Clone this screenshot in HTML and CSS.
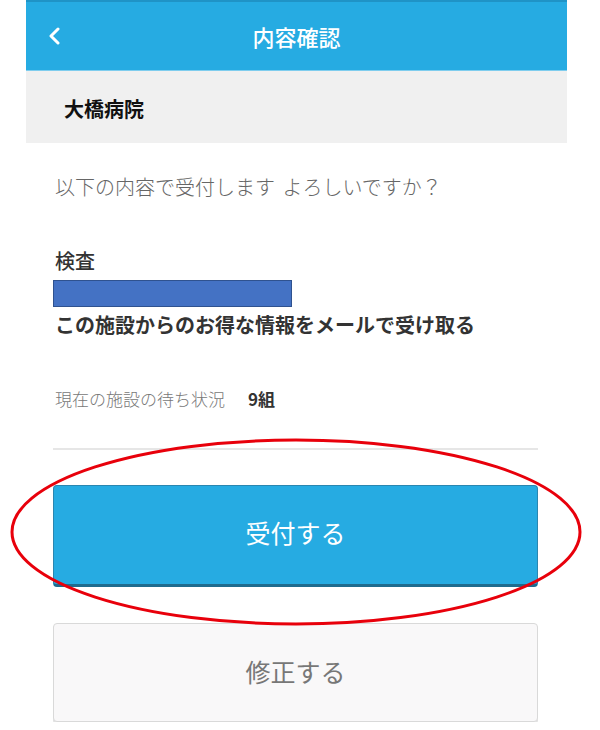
FILE: index.html
```html
<!DOCTYPE html>
<html lang="ja">
<head>
  <meta charset="UTF-8" />
  <meta name="viewport" content="width=device-width, initial-scale=1.0"/>
  <title>内容確認</title>
  <link rel="stylesheet" href="styles.css">
</head>
<body>
  <div class="app">
    <header class="topbar">
      <button class="back" aria-label="戻る">
        <svg width="12" height="18" viewBox="0 0 12 18">
          <polyline points="10,2 3,9 10,16" fill="none" stroke="#fff" stroke-width="3" stroke-linecap="round" stroke-linejoin="round"/>
        </svg>
      </button>
      <h1>内容確認</h1>
      <span></span>
    </header>

    <div class="facility">大橋病院</div>

    <main class="content">
      <p class="intro">以下の内容で受付します よろしいですか？</p>

      <p class="item">検査</p>
      <div class="redact"></div>
      <p class="mail">この施設からのお得な情報をメールで受け取る</p>

      <p class="wait">現在の施設の待ち状況<strong>9組</strong></p>

      <hr class="rule">

      <button class="btn btn-primary">受付する</button>
      <button class="btn btn-secondary">修正する</button>
    </main>
  </div>

  <!-- red annotation round the submit button -->
  <svg class="mark" width="600" height="730" viewBox="0 0 600 730">
    <ellipse cx="296" cy="532" rx="284" ry="92" fill="none" stroke="#e8000b" stroke-width="3"/>
  </svg>
</body>
</html>
```

FILE: styles.css
```css
:root {
  --blue: #26abe2;
  --gray-bg: #f0f0f0;
  --text: #222;
  --muted: #666;
}

* {
  box-sizing: border-box;
}

body {
  margin: 0;
  background: #fff;
  font-family: "Noto Sans CJK JP", "Noto Sans", sans-serif;
  color: var(--text);
  position: relative;
}

.app {
  width: 541px;
  margin-left: 26px;
}

.topbar {
  display: grid;
  grid-template-columns: 1fr auto 1fr;
  align-items: center;
  height: 71px;
  background: var(--blue);
  border-top: 2px solid #1f93c6;
  border-bottom: 1px solid #7fcdee;
}

.back {
  justify-self: start;
  background: none;
  border: none;
  padding: 0 0 0 22px;
  display: flex;
}

.topbar h1 {
  margin: 0;
  color: #fff;
  font-size: 22px;
  font-weight: 500;
  line-height: 1;
}

.facility {
  height: 72px;
  display: flex;
  align-items: center;
  padding-left: 38px;
  padding-top: 2px;
  background: var(--gray-bg);
  font-size: 20px;
  font-weight: 700;
  color: #111;
}

.content {
  padding: 30px 29px 0;
}

.content p {
  margin: 0;
}

.intro {
  font-size: 20px;
  line-height: 28px;
  font-weight: 300;
  color: var(--muted);
  word-spacing: 3px;
}

.item {
  margin-top: 46px !important;
  font-size: 20px;
  line-height: 28px;
  font-weight: 500;
  color: #333;
}

.redact {
  width: 239px;
  height: 27px;
  margin-top: 5px;
  margin-left: -2px;
  background: #4472c4;
  border: 1px solid #2f528f;
}

.mail {
  margin-top: 4px !important;
  font-size: 20px;
  line-height: 28px;
  font-weight: 700;
  color: #333;
}

.wait {
  margin-top: 48px !important;
  font-size: 17px;
  line-height: 24px;
  font-weight: 300;
  color: #777;
}

.wait strong {
  margin-left: 23px;
  font-weight: 700;
  color: #333;
}

.rule {
  margin: 37px 0 0 -2px;
  border: none;
  height: 2px;
  background: #e6e6e6;
}

.btn {
  display: block;
  width: calc(100% + 2px);
  margin-left: -2px;
  border-radius: 4px;
  font-family: inherit;
  font-size: 25px;
  font-weight: 400;
}

.btn-primary {
  height: 102px;
  margin-top: 35px;
  padding-bottom: 8px;
  background: var(--blue);
  color: #fff;
  border: 1px solid #2a86b0;
  border-bottom: 3px solid #1f6b8e;
}

.btn-secondary {
  height: 99px;
  margin-top: 36px;
  padding-bottom: 5px;
  background: #f9f8f9;
  color: #777;
  border: 1px solid #d9d9d9;
  box-shadow: 0 2px 0 #e2e2e2;
}

.mark {
  position: absolute;
  top: 0;
  left: 0;
  pointer-events: none;
}
```
